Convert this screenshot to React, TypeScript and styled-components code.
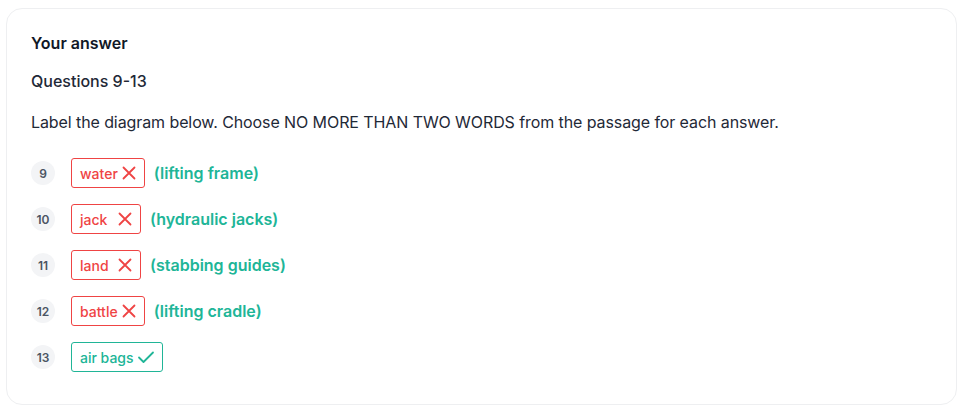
import styled, { createGlobalStyle } from "styled-components";

const GlobalStyle = createGlobalStyle`
  body {
    margin: 0;
    background: #ffffff;
    font-family: Inter, "Noto Sans", Arial, sans-serif;
    color: #1f2937;
  }
`;

const Page = styled.div`
  padding: 8px 5px 6px 6px;
`;

const Card = styled.section`
  border: 1px solid #eeeff1;
  border-radius: 16px;
  padding: 24px 24px 32px 24px;
  background: #fff;
`;

const Title = styled.h2`
  margin: 0;
  font-size: 16px;
  line-height: 20px;
  font-weight: 600;
  color: #111827;
`;

const Subtitle = styled.div`
  margin-top: 18px;
  font-size: 16px;
  line-height: 20px;
  font-weight: 500;
  color: #1f2937;
`;

const Instruction = styled.p`
  margin: 21px 0 26px;
  font-size: 16px;
  line-height: 20px;
  letter-spacing: -0.09px;
  color: #1f2937;
`;

const List = styled.div`
  display: flex;
  flex-direction: column;
  gap: 16px;
`;

const Row = styled.div`
  display: flex;
  align-items: center;
  height: 30px;
`;

const Num = styled.span`
  width: 24px;
  height: 24px;
  border-radius: 50%;
  background: #f3f4f6;
  color: #4b5563;
  font-size: 12px;
  font-weight: 600;
  display: flex;
  align-items: center;
  justify-content: center;
  margin-right: 16px;
  flex-shrink: 0;
`;

const AnswerBox = styled.span<{ $ok: boolean }>`
  box-sizing: border-box;
  height: 30px;
  min-width: 70px;
  padding: 0 7px 0 8px;
  display: inline-flex;
  align-items: center;
  justify-content: space-between;
  gap: 3px;
  border: 1px solid ${(p) => (p.$ok ? "#20b597" : "#ef4444")};
  border-radius: 3px;
  color: ${(p) => (p.$ok ? "#20b597" : "#ef4444")};
  font-size: 14px;
  font-weight: 500;
`;

const Correct = styled.span`
  margin-left: 9px;
  color: #20b597;
  font-size: 16px;
  font-weight: 600;
`;

const Cross = () => (
  <svg width="16" height="16" viewBox="0 0 16 16" fill="none">
    <path d="M2.5 2.5L13.5 13.5M13.5 2.5L2.5 13.5" stroke="#ef4444" strokeWidth="1.8" strokeLinecap="round" />
  </svg>
);

const Check = () => (
  <svg width="18" height="16" viewBox="0 0 18 16" fill="none">
    <path d="M2 8.5L6.5 13L16 3.5" stroke="#20b597" strokeWidth="1.8" strokeLinecap="round" strokeLinejoin="round" />
  </svg>
);

const answers = [
  { n: 9, given: "water", ok: false, correct: "(lifting frame)" },
  { n: 10, given: "jack", ok: false, correct: "(hydraulic jacks)" },
  { n: 11, given: "land", ok: false, correct: "(stabbing guides)" },
  { n: 12, given: "battle", ok: false, correct: "(lifting cradle)" },
  { n: 13, given: "air bags", ok: true, correct: "" },
];

export default function App() {
  return (
    <>
      <GlobalStyle />
      <Page>
        <Card>
          <Title>Your answer</Title>
          <Subtitle>Questions 9-13</Subtitle>
          <Instruction>
            Label the diagram below. Choose NO MORE THAN TWO WORDS from the passage for each answer.
          </Instruction>
          <List>
            {answers.map((a) => (
              <Row key={a.n}>
                <Num>{a.n}</Num>
                <AnswerBox $ok={a.ok}>
                  {a.given}
                  {a.ok ? <Check /> : <Cross />}
                </AnswerBox>
                {a.correct && <Correct>{a.correct}</Correct>}
              </Row>
            ))}
          </List>
        </Card>
      </Page>
    </>
  );
}
